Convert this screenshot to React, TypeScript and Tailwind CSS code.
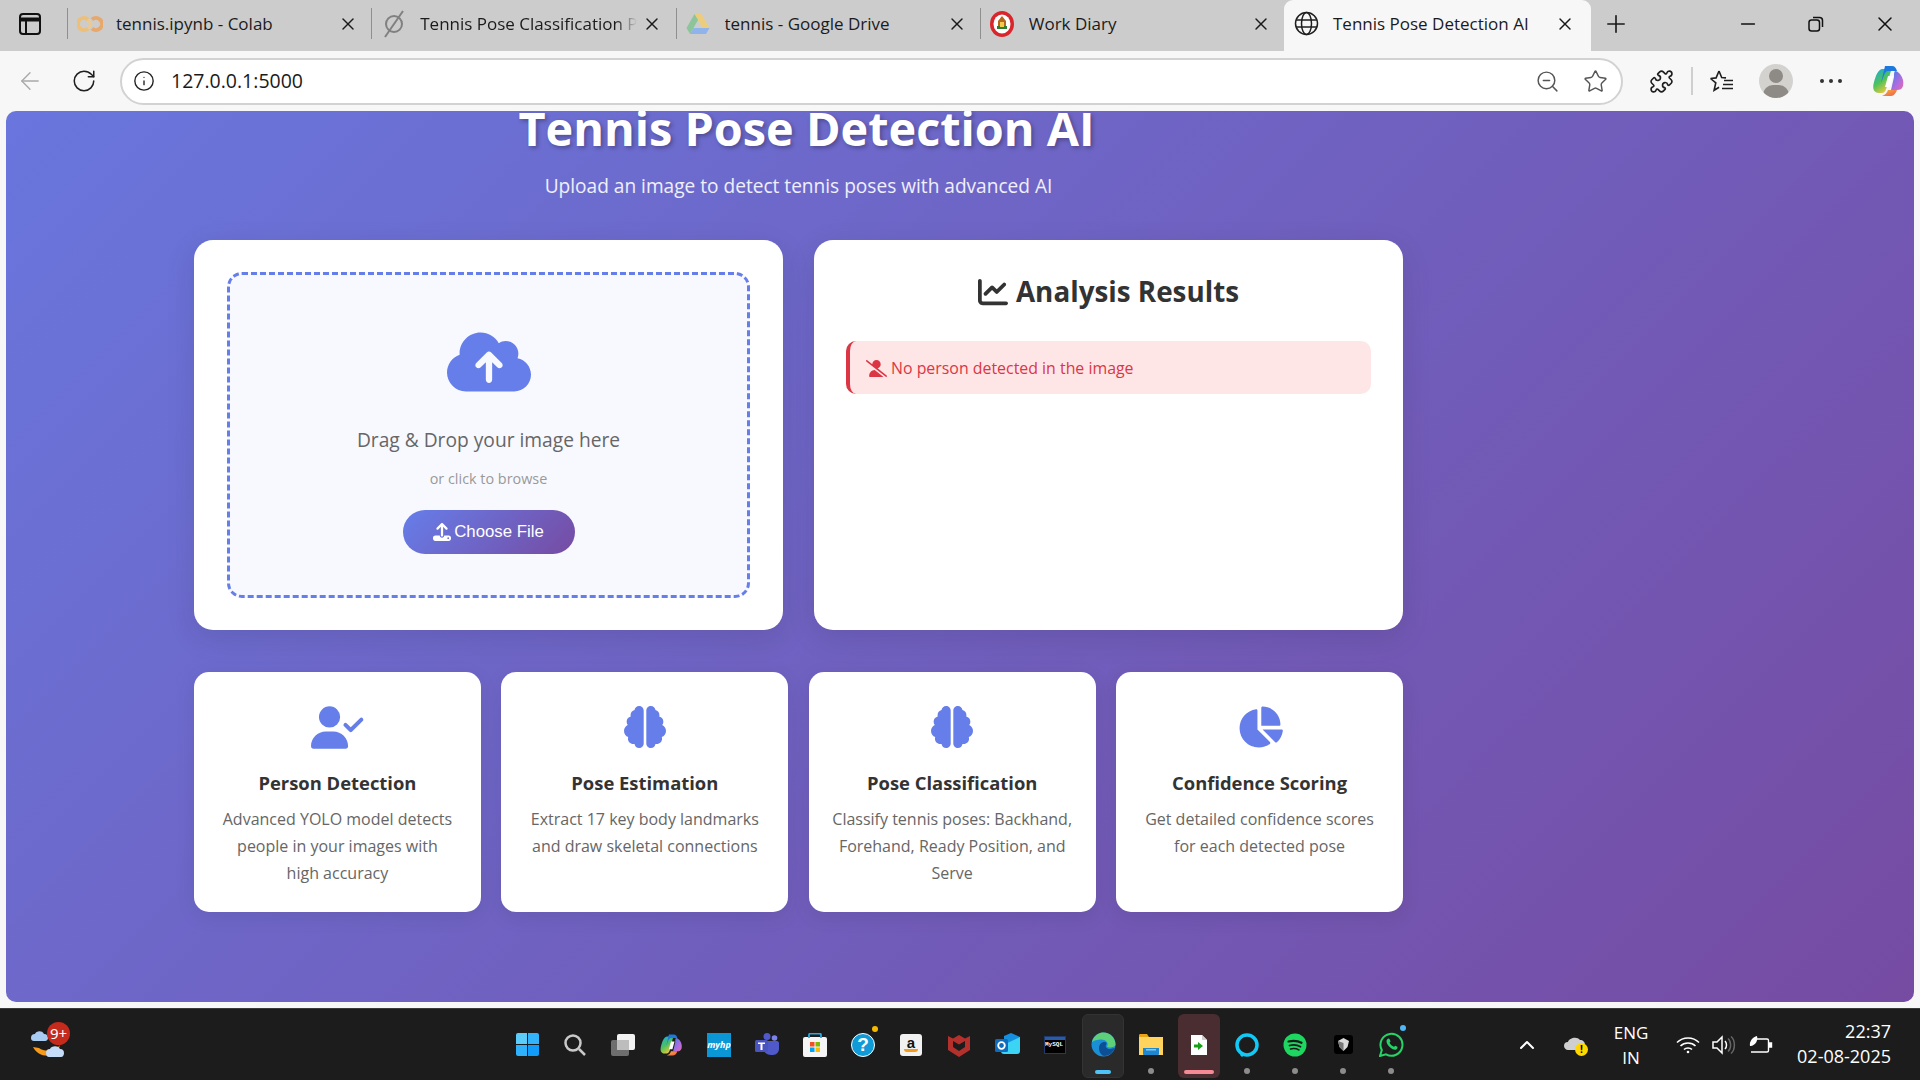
import React from "react";
import { FaBrain, FaChartLine, FaChartPie, FaCloudArrowUp, FaUpload, FaUserCheck, FaUserSlash } from "react-icons/fa6";
import { ArrowLeft, Info, Minus, Plus, Puzzle, RotateCw, Star, X, ZoomOut, ChevronUp } from "lucide-react";

const ui = "font-['Open_Sans',sans-serif]";

function Copilot({ size = 34, id = "a" }: { size?: number; id?: string }) {
  return (
    <svg width={size} height={size} viewBox="0 0 34 34">
      <defs>
        <linearGradient id={`cp1${id}`} x1="0" y1="0" x2="0.6" y2="1">
          <stop offset="0" stopColor="#19a7e8" />
          <stop offset="0.55" stopColor="#4fc25a" />
          <stop offset="1" stopColor="#f6c93a" />
        </linearGradient>
        <linearGradient id={`cp2${id}`} x1="0" y1="0" x2="1" y2="1">
          <stop offset="0" stopColor="#3a7fe8" />
          <stop offset="0.6" stopColor="#b06ce0" />
          <stop offset="1" stopColor="#e86aa8" />
        </linearGradient>
        <linearGradient id={`cp3${id}`} x1="0" y1="0" x2="1" y2="1">
          <stop offset="0" stopColor="#f7b23b" />
          <stop offset="1" stopColor="#ee5a4f" />
        </linearGradient>
      </defs>
      <path d="M11 5C7 6 5 11 3 18c-2 7 0 11 5 11h3c3 0 4-3 5-7l3-12c1-3 1-5 3-5z" fill={`url(#cp1${id})`} />
      <path d="M14 2h7c3 0 4 2 5 5l-9 0c-2 0-3 2-4 4l-3 8z" fill="#1d78e0" />
      <path d="M24 7c2 0 3 1 5 3 3 4 4 8 3 12-1 3-3 4-6 4h-6l3-13c0-3 0-5 1-6z" fill={`url(#cp2${id})`} />
      <path d="M17 26h9c-2 5-4 6-7 6h-8c3-1 5-3 6-6z" fill={`url(#cp3${id})`} />
      <path d="M17 12h5l-3 11h-5z" fill="#fff" />
    </svg>
  );
}

function ColabIcon() {
  return (
    <svg width="26" height="18" viewBox="0 0 26 18" fill="none">
      <path d="M11 4.500A6 6 0 1 0 11 13.500" stroke="#ecc07a" strokeWidth="4" />
      <path d="M15 4.500A6 6 0 1 1 15 13.500" stroke="#e8a86c" strokeWidth="4" />
      <path d="M11 4.500 L14 9 L11 13.500" stroke="#eec98e" strokeWidth="3" />
    </svg>
  );
}

function SlashedIcon() {
  return (
    <svg width="22" height="30" viewBox="0 0 22 30" fill="none" stroke="#808080" strokeWidth="2">
      <circle cx="11" cy="15" r="8" />
      <path d="M20 2 L2 28" />
    </svg>
  );
}

function DriveIcon() {
  return (
    <svg width="24" height="22" viewBox="0 0 24 22">
      <path d="M8.500 1h7l8 14h-7z" fill="#eccd7d" />
      <path d="M8.500 1l-8 14 3.500 6 8-14z" fill="#8cc59a" />
      <path d="M4 21h16l3.500-6H7.500z" fill="#8fb3ea" />
    </svg>
  );
}

function SealIcon() {
  return (
    <svg width="24" height="26" viewBox="0 0 24 26">
      <ellipse cx="12" cy="13" rx="12" ry="13" fill="#d9262c" />
      <ellipse cx="12" cy="13" rx="8.500" ry="9.500" fill="#fff" />
      <path d="M12 5l4 5v8H8v-8z" fill="#b5651d" />
      <path d="M7 15h10v3H7z" fill="#2e7d32" />
      <path d="M10 11h4v5h-4z" fill="#f3c94b" />
    </svg>
  );
}

function GlobeIcon() {
  return (
    <svg width="25" height="25" viewBox="0 0 25 25" fill="none" stroke="#1f1f1f" strokeWidth="1.500">
      <circle cx="12.500" cy="12.500" r="11" />
      <ellipse cx="12.500" cy="12.500" rx="5" ry="11" />
      <path d="M2 9h21M2 16h21" />
    </svg>
  );
}

function Tab({ icon, title, fade }: { icon: React.ReactNode; title: string; fade?: boolean }) {
  return (
    <div className="flex h-full w-[304.250px] items-center pb-[4px]">
      <div className="h-[31px] w-px bg-[#8f8f8f]" />
      <div className="flex w-[48px] items-center justify-center pr-[5px]">{icon}</div>
      <div
        className={
          fade
            ? "w-[217px] overflow-hidden whitespace-nowrap text-[17px] text-[#1b1b1b] [mask-image:linear-gradient(to_right,black_90%,transparent)]"
            : "w-[217px] overflow-hidden whitespace-nowrap text-[17px] text-[#1b1b1b]"
        }
      >
        {title}
      </div>
      <X size={20} strokeWidth={1.700} className="ml-[5px] text-[#1a1a1a]" />
    </div>
  );
}

function TabStrip() {
  return (
    <div className={`flex h-[51px] shrink-0 items-center bg-[#cccccc] ${ui}`}>
      <div className="mb-[4px] flex w-[67px] justify-center pr-[8px]">
        <svg width="22" height="22" viewBox="0 0 22 22" fill="none" stroke="#111" strokeWidth="2">
          <rect x="1" y="1" width="20" height="20" rx="3" />
          <path d="M1 6.500h20" strokeWidth="4" />
          <path d="M7 6v15" />
        </svg>
      </div>
      <Tab icon={<ColabIcon />} title="tennis.ipynb - Colab" />
      <Tab icon={<SlashedIcon />} title="Tennis Pose Classification Pipeline" fade />
      <Tab icon={<DriveIcon />} title="tennis - Google Drive" />
      <Tab icon={<SealIcon />} title="Work Diary" />
      <div className="flex h-full w-[307px] items-center rounded-t-[9px] bg-[#f7f7f7] pb-[4px]">
        <div className="flex w-[49px] justify-center pr-[5px]">
          <GlobeIcon />
        </div>
        <div className="w-[222px] whitespace-nowrap text-[17px] text-[#1b1b1b]">Tennis Pose Detection AI</div>
        <X size={20} strokeWidth={1.700} className="text-[#1a1a1a]" />
      </div>
      <Plus size={28} strokeWidth={1.400} className="mb-[4px] ml-[11px] text-[#1a1a1a]" />
      <div className="flex-1" />
      <Minus size={22} strokeWidth={1.500} className="mb-[4px] mr-[49px] text-[#111]" />
      <svg width="16" height="16" viewBox="0 0 16 16" fill="none" stroke="#111" strokeWidth="1.500" className="mb-[4px] mr-[49px]">
        <rect x="1" y="4" width="10.500" height="11" rx="2.500" />
        <path d="M5 1.500h6.500A3 3 0 0 1 14.500 4.500V11" />
      </svg>
      <X size={24} strokeWidth={1.500} className="mb-[4px] mr-[23px] text-[#111]" />
    </div>
  );
}

function Toolbar() {
  return (
    <div className={`flex h-[60px] shrink-0 items-center bg-[#f7f7f7] ${ui}`}>
      <ArrowLeft size={28} strokeWidth={1.200} className="ml-[16px] text-[#a9a9a9]" />
      <RotateCw size={26} strokeWidth={1.400} className="ml-[27px] text-[#1f1f1f]" />
      <div className="ml-[23px] flex h-[47px] w-[1503px] items-center rounded-full border-2 border-[#d2d2d2] bg-white">
        <Info size={22} strokeWidth={1.500} className="ml-[11px] text-[#222]" />
        <span className="ml-[16px] text-[19.500px] text-[#1a1a1a]">127.0.0.1:5000</span>
        <div className="flex-1" />
        <ZoomOut size={25} strokeWidth={1.400} className="mr-[23px] text-[#555]" />
        <Star size={25} strokeWidth={1.400} className="mr-[13px] text-[#555]" />
      </div>
      <Puzzle size={25} strokeWidth={1.600} className="ml-[26px] text-[#1f1f1f]" />
      <div className="ml-[17px] h-[28px] w-[2px] bg-[#cfcfcf]" />
      <svg width="26" height="24" viewBox="0 0 26 24" fill="none" stroke="#1f1f1f" strokeWidth="1.600" className="ml-[16px]">
        <path d="M10 2l2.700 6.500 4.300.4M1.500 9.500l5.300 4.300-1.700 7.500 5-3M1.500 9.500l5.600-.6L10 2" />
        <path d="M15 11.500h9M14 15.500h10M13 19.500h11" />
      </svg>
      <div className="relative ml-[24px] h-[34px] w-[34px] overflow-hidden rounded-full bg-[#d4d2cf]">
        <div className="absolute left-[10px] top-[5px] h-[14px] w-[14px] rounded-full bg-[#8e8a86]" />
        <div className="absolute left-[4px] top-[21px] h-[20px] w-[26px] rounded-full bg-[#8e8a86]" />
      </div>
      <div className="ml-[27px] flex gap-[5px]">
        <div className="h-[4px] w-[4px] rounded-full bg-[#333]" />
        <div className="h-[4px] w-[4px] rounded-full bg-[#333]" />
        <div className="h-[4px] w-[4px] rounded-full bg-[#333]" />
      </div>
      <div className="ml-[29px]">
        <Copilot size={34} id="a" />
      </div>
    </div>
  );
}

function UploadCard() {
  return (
    <div className="rounded-[19px] bg-white px-[33px] py-[32px] shadow-[0_8px_30px_rgba(0,0,0,0.1)]">
      <div className="flex h-[326px] flex-col items-center rounded-[15px] border-[3px] border-dashed border-[#667eea] bg-[#f8f9ff] pt-[45px]">
        <FaCloudArrowUp size={84} className="text-[#667eea]" />
        <div className="mt-[23px] text-[19.200px] leading-[26px] text-[#666]">Drag &amp; Drop your image here</div>
        <div className="mt-[16px] text-[14.400px] leading-[20px] text-[#999]">or click to browse</div>
        <button className="mt-[21px] flex h-[44px] w-[172px] items-center justify-center gap-[3px] rounded-full bg-[linear-gradient(135deg,#667eea,#764ba2)] font-['Liberation_Sans',sans-serif] text-[16.800px] text-white">
          <FaUpload size={18} />
          Choose File
        </button>
      </div>
    </div>
  );
}

function ResultsCard() {
  return (
    <div className="rounded-[19px] bg-white px-[32px] py-[32px] shadow-[0_8px_30px_rgba(0,0,0,0.1)]">
      <div className="flex h-[40px] items-center justify-center gap-[8px] text-[27.800px] font-bold text-[#333]">
        <FaChartLine size={30} />
        <span>Analysis Results</span>
      </div>
      <div className="mt-[29px] flex h-[53px] items-center gap-[4px] rounded-[10px] border-l-[4px] border-[#dc3545] bg-[#ffe6e6] pl-[16px] pt-[2px] text-[15.900px] text-[#dc3545]">
        <FaUserSlash size={21} />
        <span>No person detected in the image</span>
      </div>
    </div>
  );
}

function Feature({ icon, title, text }: { icon: React.ReactNode; title: string; text: string }) {
  return (
    <div className="flex h-[240px] flex-col items-center rounded-[15px] bg-white pt-[34px] text-center shadow-[0_5px_20px_rgba(0,0,0,0.08)]">
      <div className="flex h-[42px] items-center justify-center text-[#667eea]">{icon}</div>
      <div className="mt-[21px] text-[18.400px] font-bold leading-[28px] text-[#333]">{title}</div>
      <div className="mt-[9px] whitespace-pre-line text-[16px] leading-[27px] text-[#666]">{text}</div>
    </div>
  );
}

function Page() {
  return (
    <div className="flex-1 overflow-hidden rounded-[10px] bg-[linear-gradient(135deg,#6976dd,#764ba2)]">
      <div className={`ml-[188px] -mt-[13px] w-[1209px] ${ui}`}>
        <h1 className="h-[60px] pl-[16px] text-center text-[46.800px] font-bold leading-[60px] text-white [text-shadow:2px_2px_4px_rgba(0,0,0,0.3)]">
          Tennis Pose Detection AI
        </h1>
        <p className="mt-[14px] text-center text-[19.100px] leading-[28px] text-white/90">
          Upload an image to detect tennis poses with advanced AI
        </p>
        <div className="mt-[40px] grid grid-cols-2 gap-[31px]">
          <UploadCard />
          <ResultsCard />
        </div>
        <div className="mt-[42px] grid grid-cols-4 gap-[20.500px]">
          <Feature
            icon={<FaUserCheck size={53} />}
            title="Person Detection"
            text={"Advanced YOLO model detects\npeople in your images with\nhigh accuracy"}
          />
          <Feature
            icon={<FaBrain size={42} />}
            title="Pose Estimation"
            text={"Extract 17 key body landmarks\nand draw skeletal connections"}
          />
          <Feature
            icon={<FaBrain size={42} />}
            title="Pose Classification"
            text={"Classify tennis poses: Backhand,\nForehand, Ready Position, and\nServe"}
          />
          <Feature
            icon={<FaChartPie size={46} />}
            title="Confidence Scoring"
            text={"Get detailed confidence scores\nfor each detected pose"}
          />
        </div>
      </div>
    </div>
  );
}

function Weather() {
  return (
    <div className="relative ml-[28px] h-[44px] w-[44px]">
      <svg width="44" height="44" viewBox="0 0 44 44" className="absolute left-0 top-0">
        <path d="M5 24c4 8 14 11 21 7 3-2 5-5 6-9-4 5-14 8-21 3z" fill="#f59a1b" />
        <path d="M3 15a4 4 0 0 1 4-4c1-3 7-4 9 0 3 0 4 2 4 4 0 1-1 3-3 3H6c-2 0-3-1-3-3z" fill="#a9cdf2" />
        <path d="M18 30a4 4 0 0 1 4-4c1-3 8-4 10 0 3 0 4 2 4 4 0 2-1 4-3 4H21c-2 0-3-2-3-4z" fill="#c4dcf7" />
      </svg>
      <div className="absolute left-[19px] -top-[1px] flex h-[23px] w-[23px] items-center justify-center rounded-full bg-[#c42b1c] text-[15px] leading-none text-white">
        9+
      </div>
    </div>
  );
}

function Slot({ children, className = "" }: { children: React.ReactNode; className?: string }) {
  return <div className={`relative flex h-[60px] w-[48px] items-center justify-center ${className}`}>{children}</div>;
}

function Dot() {
  return <div className="absolute bottom-[1px] left-[21px] h-[6px] w-[6px] rounded-full bg-[#8c8c8c]" />;
}

function TaskIcons() {
  return (
    <div className="flex w-[912px] items-center">
      <Slot>
        <div className="grid grid-cols-2 gap-[1px]">
          <div className="h-[11px] w-[11px] rounded-tl-[2px] bg-[#5ccdfb]" />
          <div className="h-[11px] w-[11px] rounded-tr-[2px] bg-[#33b4fa]" />
          <div className="h-[11px] w-[11px] rounded-bl-[2px] bg-[#2fb1fb]" />
          <div className="h-[11px] w-[11px] rounded-br-[2px] bg-[#129cfa]" />
        </div>
      </Slot>
      <Slot>
        <svg width="24" height="24" viewBox="0 0 24 24" fill="none" stroke="#c9c9c9" strokeWidth="2.500">
          <circle cx="10" cy="10" r="7.500" />
          <path d="M16 16l6 6" />
        </svg>
      </Slot>
      <Slot>
        <svg width="24" height="22" viewBox="0 0 24 22">
          <rect x="6" y="0" width="18" height="16" rx="2" fill="#f2f2f2" />
          <rect x="0" y="6" width="18" height="16" rx="2" fill="#6e6e6e" />
          <rect x="6" y="6" width="12" height="10" fill="#bdbdbd" />
        </svg>
      </Slot>
      <Slot>
        <Copilot size={24} id="b" />
      </Slot>
      <Slot>
        <div className="flex h-[24px] w-[24px] items-center justify-center bg-[#0b96d6] text-[9px] font-bold italic text-white">
          myhp
        </div>
      </Slot>
      <Slot>
        <svg width="25" height="23" viewBox="0 0 25 23">
          <circle cx="19.500" cy="5" r="2.800" fill="#7b83eb" />
          <circle cx="12" cy="3.500" r="3.500" fill="#5059c9" />
          <path d="M8 8h14c1 0 2 1 2 2v6c0 3-3 6-6 6h-2c-4 0-8-3-8-7z" fill="#5059c9" />
          <rect x="0" y="7" width="13" height="12" rx="1.500" fill="#4b53bc" />
          <path d="M3 9.500h7v1.600H7.500V17h-2v-5.900H3z" fill="#fff" />
        </svg>
      </Slot>
      <Slot>
        <svg width="24" height="24" viewBox="0 0 24 24">
          <rect x="0" y="4" width="24" height="20" rx="2" fill="#f5f5f5" />
          <path d="M6 5V2c0-1 .5-1.500 1.500-1.500h9C17.500.5 18 1 18 2v3" fill="none" stroke="#29a8df" strokeWidth="1.800" />
          <rect x="7" y="9" width="4.500" height="4.500" fill="#f25022" />
          <rect x="12.500" y="9" width="4.500" height="4.500" fill="#7fba00" />
          <rect x="7" y="14.500" width="4.500" height="4.500" fill="#00a4ef" />
          <rect x="12.500" y="14.500" width="4.500" height="4.500" fill="#ffb900" />
        </svg>
      </Slot>
      <Slot>
        <div className="flex h-[24px] w-[24px] items-center justify-center rounded-full border-[1.500px] border-white bg-[#0f9ad8] font-['Liberation_Sans',sans-serif] text-[19px] font-bold leading-none text-white">
          ?
        </div>
        <div className="absolute left-[33px] top-[11px] h-[6px] w-[6px] rounded-full bg-[#f7b900]" />
      </Slot>
      <Slot>
        <div className="flex h-[22px] w-[22px] flex-col items-center rounded-[3px] bg-[#f1f1f1] font-['Liberation_Sans',sans-serif] text-[15px] font-bold leading-[17px] text-[#111]">
          a
          <div className="-mt-[2px] h-[3px] w-[14px] rounded-b-full bg-[#f59a1b]" />
        </div>
      </Slot>
      <Slot>
        <svg width="22" height="24" viewBox="0 0 22 24">
          <path d="M0 3l5 2.500L11 2l6 3.500L22 3v14l-11 7-11-7z" fill="#b4302c" />
          <path d="M5 8v6l6 4 6-4V8l-6 3.500z" fill="#1c1c1c" />
        </svg>
      </Slot>
      <Slot>
        <svg width="25" height="23" viewBox="0 0 25 23">
          <path d="M9 3l7-3 9 4v10L9 14z" fill="#1490df" />
          <path d="M6 13l19-9v14c0 2-1 3-3 3H9c-2 0-3-1-3-3z" fill="#3bd4f5" />
          <rect x="0" y="6" width="13" height="13" rx="1.500" fill="#0f6cbd" />
          <circle cx="6.500" cy="12.500" r="3.300" fill="none" stroke="#fff" strokeWidth="1.800" />
        </svg>
      </Slot>
      <Slot>
        <div className="flex h-[18px] w-[22px] flex-col border border-[#1e3a6e] bg-black">
          <div className="h-[3px] bg-[#2a5ba8]" />
          <div className="overflow-hidden whitespace-nowrap font-['Liberation_Mono',monospace] text-[6px] font-bold leading-[10px] text-white">
            MySQL
          </div>
        </div>
      </Slot>
      <Slot>
        <div className="absolute bottom-[-3px] left-[3px] top-[-1px] w-[42px] rounded-[6px] border border-[#333] bg-[#2a2a2a]" />
        <svg width="25" height="25" viewBox="0 0 25 25" className="relative">
          <circle cx="12.500" cy="12.500" r="12" fill="#1b8fd6" />
          <path d="M1 10C3 3 8 .5 12.500.5 19 .5 24.500 6 24.500 12.500c0 2-3 3-6 3-2 0-3-1-2-2 1-3-2-6-6-6-4 0-8 1-9 2.500z" fill="#5fd07a" />
          <path d="M8 16c0-4 3-6 5-6 3 0 3 2 2 3-1 2 1 4 4 4 2 0 3-1 5-1-2 5-7 8-11 8-3-1-5-4-5-8z" fill="#0c4f95" />
        </svg>
        <div className="absolute bottom-[1px] left-[16px] h-[4px] w-[16px] rounded-full bg-[#4fc3f7]" />
      </Slot>
      <Slot>
        <svg width="24" height="21" viewBox="0 0 24 21">
          <path d="M0 1.500C0 .5.500 0 1.500 0H8l2 3h14v18H0z" fill="#e8a317" />
          <rect x="0" y="3" width="24" height="18" fill="#ffd35c" />
          <path d="M4 14h16v6c0 .5-.5 1-1 1H5c-.5 0-1-.5-1-1z" fill="#1f86d0" />
          <rect x="7" y="15" width="10" height="1.500" fill="#8ec6ef" />
        </svg>
        <Dot />
      </Slot>
      <Slot>
        <div className="absolute bottom-[-3px] left-[3px] top-[-1px] w-[42px] rounded-[6px] bg-[#4a2d31]" />
        <svg width="16" height="20" viewBox="0 0 16 20" className="relative">
          <path d="M0 0h11l5 5v15H0z" fill="#fff" />
          <path d="M11 0v5h5z" fill="#cfcfcf" />
          <path d="M3 9.500h4V7l5 4-5 4v-2.500H3z" fill="#16a016" />
        </svg>
        <div className="absolute bottom-[1px] left-[9px] h-[4px] w-[30px] rounded-full bg-[#f48a96]" />
      </Slot>
      <Slot>
        <svg width="24" height="24" viewBox="0 0 24 24" fill="none">
          <circle cx="12" cy="12" r="10" stroke="#12c8f5" strokeWidth="3.500" />
          <path d="M6 23l3-3" stroke="#12c8f5" strokeWidth="3" />
        </svg>
        <Dot />
      </Slot>
      <Slot>
        <svg width="24" height="24" viewBox="0 0 24 24" fill="none" stroke="#1c1c1c" strokeLinecap="round">
          <circle cx="12" cy="12" r="11.500" fill="#1ed760" stroke="none" />
          <path d="M5.500 8.500c4-1 9-1 13 1.300" strokeWidth="2.200" />
          <path d="M6.500 12.500c3.500-1 8-.6 11 1.200" strokeWidth="1.800" />
          <path d="M7.500 16c3-.7 6-.4 8.500 1" strokeWidth="1.500" />
        </svg>
        <Dot />
      </Slot>
      <Slot>
        <svg width="19" height="19" viewBox="0 0 19 19">
          <rect width="19" height="19" rx="3" fill="#000" />
          <path d="M9.500 3l5.500 3-1.500 6-4 4-4-4L4 6z" fill="#d9d9d9" />
          <path d="M9.500 8v8l-4-4L4 6z" fill="#777" />
        </svg>
        <Dot />
      </Slot>
      <Slot>
        <svg width="25" height="25" viewBox="0 0 25 25" fill="none">
          <path d="M1 24l1.800-6A11 11 0 1 1 7 22.300z" stroke="#25d366" strokeWidth="2" />
          <path d="M8.500 7c1-1 2-.5 2.500 1l.5 1.500-1 1.300c1 2 2.500 3.200 4.500 4l1.300-1 2 1c.5 1 0 2-1 2.700-3 1.500-10-4-9.800-8.500 0-.7.500-1.500 1-2z" fill="#25d366" />
        </svg>
        <div className="absolute left-[33px] top-[10px] h-[6px] w-[6px] rounded-full bg-[#4fb7f5]" />
        <Dot />
      </Slot>
    </div>
  );
}

function Tray() {
  return (
    <div className={`flex flex-1 items-center text-white ${ui}`}>
      <ChevronUp size={24} strokeWidth={2} className="ml-[100px]" />
      <div className="relative ml-[24px] h-[22px] w-[26px]">
        <svg width="24" height="16" viewBox="0 0 24 16" className="absolute left-0 top-[1px]">
          <path d="M1 11a4 4 0 0 1 4-4c1-4 9-6 12-2 3 0 5 2 5 5 0 3-2 5-4 5H5c-2 0-4-2-4-4z" fill="#cfcfcf" />
        </svg>
        <div className="absolute left-[12px] top-[9px] flex h-[13px] w-[13px] items-center justify-center rounded-full bg-[#ffd800] text-[10px] font-bold leading-none text-black">
          !
        </div>
      </div>
      <div className="ml-[11px] w-[62px] text-center text-[17px] leading-[25px]">
        <div>ENG</div>
        <div>IN</div>
      </div>
      <svg width="24" height="18" viewBox="0 0 24 18" fill="none" stroke="#fff" strokeWidth="1.600" className="ml-[14px]">
        <path d="M1 6.500c6-6 16-6 22 0" />
        <path d="M4.500 10c4-4 11-4 15 0" />
        <path d="M8 13.500c2-2 6-2 8 0" />
        <circle cx="12" cy="16" r="1.300" fill="#fff" stroke="none" />
      </svg>
      <svg width="25" height="20" viewBox="0 0 25 20" fill="none" stroke="#fff" strokeWidth="1.500" className="ml-[12px]">
        <path d="M1 7v6h4l5 5V2L5 7z" />
        <path d="M13 6c2 2 2 6 0 8" />
        <path d="M16 3.500c3.500 3 3.500 10 0 13M19 1.500c4.500 4 4.500 13 0 17" stroke="#666" />
      </svg>
      <svg width="25" height="20" viewBox="0 0 25 20" fill="none" stroke="#fff" strokeWidth="1.400" className="ml-[11px]">
        <path d="M6 4h13c1 0 1.500.5 1.500 1.500v10c0 1-.5 1.500-1.500 1.500H3" />
        <path d="M21 8h2.500v4H21" fill="#fff" />
        <path d="M2 11C1 6 5 2 9 1c1 4-1 9-6 10z" fill="#fff" stroke="none" />
      </svg>
      <div className="flex-1 pr-[29px] text-right text-[18px] leading-[25px]">
        <div className="-mt-[2px]">22:37</div>
        <div>02-08-2025</div>
      </div>
    </div>
  );
}

function Taskbar() {
  return (
    <div className="flex h-[72px] shrink-0 items-center border-t border-[#3a3a3a] bg-[#1c1c1c]">
      <div className="w-[503px]">
        <Weather />
      </div>
      <TaskIcons />
      <Tray />
    </div>
  );
}

export default function App() {
  return (
    <div className="flex h-[1080px] w-[1920px] flex-col overflow-hidden bg-[#f7f7f7]">
      <TabStrip />
      <Toolbar />
      <div className="flex h-[897px] shrink-0 flex-col px-[6px] pb-[6px]">
        <Page />
      </div>
      <Taskbar />
    </div>
  );
}
